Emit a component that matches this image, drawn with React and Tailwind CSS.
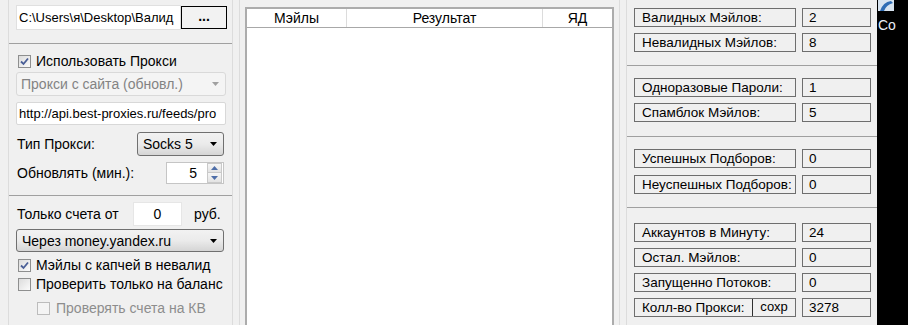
import React from "react";

function Check({ checked, disabled }) {
  return (
    <span
      className={
        "w-[13px] h-[13px] border flex items-center justify-center shrink-0 " +
        (disabled
          ? "border-[#bcbcbc] bg-[#f4f4f4]"
          : "border-[#8e8f8f] bg-gradient-to-br from-[#dcdcdc] to-[#fbfbfb]")
      }
    >
      {checked && (
        <svg width="9" height="9" viewBox="0 0 9 9">
          <path d="M1 4.5 L3.5 7 L8 1.5" fill="none" stroke="#4a5f97" strokeWidth="1.8" />
        </svg>
      )}
    </span>
  );
}

function Arrow({ color = "#000" }) {
  return (
    <svg width="7" height="4" viewBox="0 0 7 4">
      <path d="M0 0 H7 L3.5 4 Z" fill={color} />
    </svg>
  );
}

function StatRow({ label, value, extra }) {
  return (
    <div className="flex h-[19px]">
      <div className="w-[162px] h-[19px] border border-[#6e6e6e] flex items-center relative whitespace-nowrap text-[13.5px]">
        <span className="pl-[7px] leading-none">{label}</span>
        {extra && (
          <div className="absolute right-0 top-0 h-[17px] w-[43px] border-l border-[#303030] flex items-start justify-center">
            <span className="text-[13px] leading-none pt-[1px]">{extra}</span>
          </div>
        )}
      </div>
      <div className="ml-[6px] w-[69px] h-[19px] border border-[#6e6e6e] flex items-center text-[13.5px]">
        <span className="pl-[6px] leading-none">{value}</span>
      </div>
    </div>
  );
}

export default function App() {
  return (
    <div className="w-[908px] h-[325px] bg-[#f0f0f0] flex overflow-hidden text-[14px] text-black font-['Liberation_Sans',Arial,sans-serif]">
      {/* Left panel */}
      <div className="ml-[8px] w-[225px] h-full border-l border-r border-[#dcdcdc] flex flex-col shrink-0">
        {/* Section 1 */}
        <div className="h-[44px] border-b border-[#a0a0a0] pl-[7px] pt-[5px] flex">
          <div className="w-[165px] h-[25px] bg-white border border-[#e0e0e0] flex items-center pl-[2px] overflow-hidden whitespace-nowrap leading-none text-[13px]">
            C:\Users\я\Desktop\Валид
          </div>
          <div className="w-[46px] h-[23px] mt-[1px] border border-black bg-[#f2f2f2] flex items-center justify-center font-bold leading-none pb-[4px]">
            ...
          </div>
        </div>
        {/* Section 2 */}
        <div className="h-[152px] border-b border-[#a0a0a0] pl-[7px] pr-[6px] flex flex-col">
          <div className="mt-[9px] h-[16px] flex items-center pl-[2px]">
            <Check checked />
            <span className="ml-[5px] leading-none">Использовать Прокси</span>
          </div>
          <div className="mt-[3px] w-[210px] h-[24px] border border-[#d9d9d9] rounded-[3px] bg-[#f4f4f4] flex items-center justify-between pl-[4px] pr-[6px] text-[#838383]">
            <span className="leading-none">Прокси с сайта (обновл.)</span>
            <Arrow color="#a0a0a0" />
          </div>
          <div className="mt-[6px] w-[210px] h-[23px] bg-white border border-[#d8d8d8] rounded-[2px] flex items-center pl-[2px] overflow-hidden whitespace-nowrap text-[13px]">
            <span className="leading-none">http://api.best-proxies.ru/feeds/pro</span>
          </div>
          <div className="mt-[7px] h-[24px] flex items-center">
            <span className="w-[121px] pl-[1px] leading-none">Тип Прокси:</span>
            <div className="w-[87px] h-[24px] border border-[#707070] rounded-[3px] bg-gradient-to-b from-[#f2f2f2] via-[#ebebeb] to-[#d5d5d5] flex items-center justify-between pl-[5px] pr-[6px]">
              <span className="leading-none">Socks 5</span>
              <Arrow />
            </div>
          </div>
          <div className="mt-[6px] h-[22px] flex items-center">
            <span className="w-[150px] pl-[1px] leading-none">Обновлять (мин.):</span>
            <div className="w-[58px] h-[22px] bg-white border border-[#c5c5c5] flex items-center">
              <span className="flex-1 text-right pr-[10px] leading-none">5</span>
              <div className="w-[15px] h-[20px] flex flex-col mr-[1px]">
                <div className="h-[10px] border border-[#c9c9c9] bg-gradient-to-b from-[#f6f6f6] to-[#e3e3e3] flex items-center justify-center">
                  <svg width="7" height="4" viewBox="0 0 7 4"><path d="M0 4 H7 L3.5 0 Z" fill="#4e6ea8" /></svg>
                </div>
                <div className="h-[10px] border border-t-0 border-[#c9c9c9] bg-gradient-to-b from-[#f6f6f6] to-[#e3e3e3] flex items-center justify-center">
                  <svg width="7" height="4" viewBox="0 0 7 4"><path d="M0 0 H7 L3.5 4 Z" fill="#4e6ea8" /></svg>
                </div>
              </div>
            </div>
          </div>
        </div>
        {/* Section 3 */}
        <div className="flex-1 pl-[7px] pr-[6px] flex flex-col">
          <div className="mt-[6px] h-[24px] flex items-center">
            <span className="w-[117px] pl-[1px] leading-none whitespace-nowrap">Только счета от</span>
            <div className="w-[49px] h-[24px] bg-white border border-[#e6e6e6] flex items-center justify-center">
              <span className="leading-none">0</span>
            </div>
            <span className="ml-[12px] leading-none">руб.</span>
          </div>
          <div className="mt-[3px] w-[208px] h-[23px] border border-[#707070] rounded-[3px] bg-gradient-to-b from-[#f2f2f2] via-[#ebebeb] to-[#d5d5d5] flex items-center justify-between pl-[5px] pr-[6px]">
            <span className="leading-none">Через money.yandex.ru</span>
            <Arrow />
          </div>
          <div className="mt-[5px] h-[16px] flex items-center pl-[2px]">
            <Check checked />
            <span className="ml-[5px] leading-none">Мэйлы с капчей в невалид</span>
          </div>
          <div className="mt-[3px] h-[16px] flex items-center pl-[2px]">
            <Check />
            <span className="ml-[5px] leading-none whitespace-nowrap">Проверить только на баланс</span>
          </div>
          <div className="mt-[8px] h-[16px] flex items-center pl-[21px]">
            <Check disabled />
            <span className="ml-[6px] leading-none text-[#8d8d8d]">Проверять счета на КВ</span>
          </div>
        </div>
      </div>

      {/* Center */}
      <div className="ml-[6px] h-full border-l border-r border-[#dcdcdc] pl-[5px] pr-[5px] pt-[7px] flex shrink-0">
        <div className="w-[369px] h-[330px] bg-white border-2 border-[#acacac] flex flex-col">
          <div className="h-[19px] flex border-b border-[#a8a8a8] items-center">
            <div className="w-[100px] h-full flex items-center justify-center border-r border-[#dcdcdc]">
              <span className="leading-none">Мэйлы</span>
            </div>
            <div className="w-[196px] h-full flex items-center justify-center border-r border-[#dcdcdc]">
              <span className="leading-none">Результат</span>
            </div>
            <div className="flex-1 h-full flex items-center justify-center">
              <span className="leading-none">ЯД</span>
            </div>
          </div>
        </div>
      </div>

      {/* Right panel */}
      <div className="ml-[6px] w-[251px] h-full border-l border-[#dcdcdc] flex flex-col shrink-0">
        <div className="h-[66px] border-b border-[#a0a0a0] pl-[7px] pt-[8px] flex flex-col gap-[6px]">
          <StatRow label="Валидных Мэйлов:" value="2" />
          <StatRow label="Невалидных Мэйлов:" value="8" />
        </div>
        <div className="h-[71px] border-b border-[#a0a0a0] pl-[7px] pt-[12px] flex flex-col gap-[6px]">
          <StatRow label="Одноразовые Пароли:" value="1" />
          <StatRow label="Спамблок Мэйлов:" value="5" />
        </div>
        <div className="h-[71px] border-b border-[#a0a0a0] pl-[7px] pt-[12px] flex flex-col gap-[7px]">
          <StatRow label="Успешных Подборов:" value="0" />
          <StatRow label="Неуспешных Подборов:" value="0" />
        </div>
        <div className="flex-1 pl-[7px] pt-[15px] flex flex-col gap-[6px]">
          <StatRow label="Аккаунтов в Минуту:" value="24" />
          <StatRow label="Остал. Мэйлов:" value="0" />
          <StatRow label="Запущенно Потоков:" value="0" />
          <StatRow label="Колл-во Прокси:" value="3278" extra="сохр" />
        </div>
      </div>

      {/* Desktop strip */}
      <div className="flex-1 h-full bg-black flex flex-col overflow-hidden">
        <svg width="16" height="11" viewBox="0 0 16 11" className="ml-[1px]">
          <rect x="0" y="0" width="16" height="11" fill="#d8e4f0" />
          <path d="M2 11 Q5 2 13 1 L15 3 Q8 5 6 11 Z" fill="#2f6db5" />
        </svg>
        <span className="mt-[7px] ml-[1px] text-[14px] leading-none text-[#e8eef8] whitespace-nowrap">Co</span>
      </div>
    </div>
  );
}
